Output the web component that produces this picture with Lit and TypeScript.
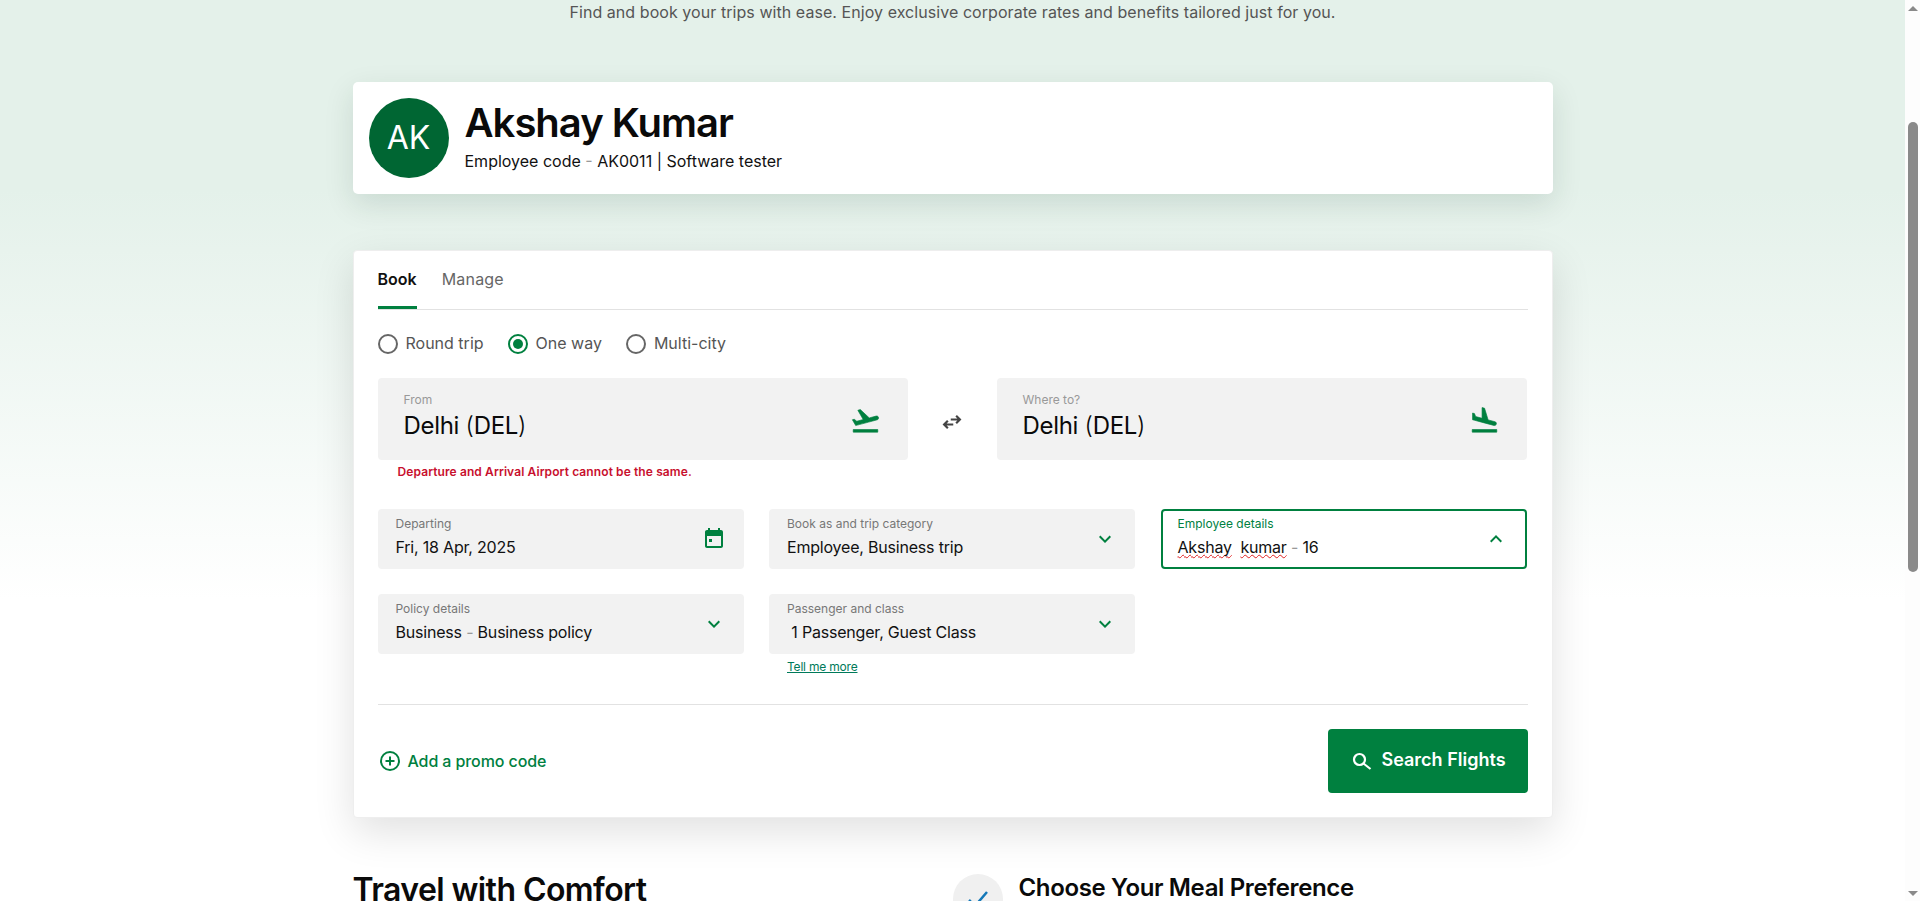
import { LitElement, css, html, svg } from 'lit';
import { customElement, state } from 'lit/decorators.js';

const TAKEOFF = svg`<path d="M2.5 19h19v2h-19v-2zm19.57-9.36c-.21-.8-1.04-1.28-1.84-1.06L14.92 10 8 3.57l-1.91.51 4.14 7.17-4.97 1.33-1.97-1.54-1.45.39 2.59 4.49s7.12-1.9 16.57-4.43c.81-.23 1.28-1.05 1.07-1.85z"/>`;
const LANDING = svg`<path d="M2.5 19h19v2h-19v-2zm7.18-5.73l4.35 1.16 5.31 1.42c.8.21 1.62-.26 1.84-1.06.21-.8-.26-1.62-1.06-1.84l-5.31-1.42-2.76-9.02L10.12 2v8.28L5.15 8.95l-.93-2.32-1.45-.39v5.17l1.6.43 5.31 1.43z"/>`;
const CALENDAR = svg`<path d="M19 3h-1V1h-2v2H8V1H6v2H5c-1.11 0-1.99.9-1.99 2L3 19c0 1.1.89 2 2 2h14c1.1 0 2-.9 2-2V5c0-1.1-.9-2-2-2zm0 16H5V9h14v10zM7 12h3v3H7z"/>`;
const CHEVRON_DOWN = svg`<path d="M16.59 8.59 12 13.17 7.41 8.59 6 10l6 6 6-6z"/>`;
const CHEVRON_UP = svg`<path d="M12 8l-6 6 1.41 1.41L12 10.83l4.59 4.58L18 14z"/>`;

@customElement('app-root')
export class AppRoot extends LitElement {
  static styles = css`
    :host {
      display: block;
      height: 901px;
      overflow: hidden;
      font-family: 'Inter', 'Liberation Sans', sans-serif;
      color: #111;
    }

    .page {
      display: flex;
      height: 901px;
    }

    .main {
      flex: 1;
      min-width: 0;
      overflow: hidden;
      background: linear-gradient(180deg, #e4f1ea 0, #e4f1ea 190px, #ffffff 600px);
    }

    .container {
      width: 1200px;
      margin: 0 auto;
    }

    .tagline {
      height: 24px;
      line-height: 24px;
      font-size: 16px;
      letter-spacing: 0.06px;
      color: #555;
      text-align: center;
    }

    .profile {
      display: flex;
      align-items: center;
      gap: 16px;
      height: 112px;
      margin-top: 58px;
      padding: 0 16px;
      box-sizing: border-box;
      background: #fff;
      border-radius: 5px;
      box-shadow: 0 10px 30px rgba(0, 50, 30, 0.12);
    }

    .avatar {
      flex: none;
      width: 80px;
      height: 80px;
      border-radius: 50%;
      background: #006633;
      color: #fff;
      font-size: 32px;
      line-height: 80px;
      text-align: center;
    }

    .identity {
      padding-bottom: 5px;
    }

    .name {
      font-size: 40px;
      line-height: 46px;
      font-weight: 600;
      letter-spacing: -1px;
      color: #0a0a0a;
    }

    .code {
      font-size: 16px;
      line-height: 20px;
      margin-top: 5px;
      color: #111;
    }

    .muted {
      color: #999;
    }

    .booking {
      margin-top: 56px;
      height: 568px;
      padding: 0 24px;
      box-sizing: border-box;
      background: #fff;
      border: 1px solid #eee;
      border-radius: 4px;
      box-shadow: 0 14px 40px rgba(0, 0, 0, 0.12);
    }

    .tabs {
      display: flex;
      gap: 25px;
      height: 58px;
      border-bottom: 1px solid #e2e2e2;
    }

    .tab {
      height: 58px;
      box-sizing: border-box;
      padding-top: 17px;
      font-size: 16px;
      line-height: 22px;
      letter-spacing: 0.2px;
      color: #666;
    }

    .tab.active {
      color: #111;
      font-weight: 600;
      letter-spacing: 0;
      border-bottom: 3px solid #00803f;
    }

    .trip-types {
      display: flex;
      gap: 24px;
      margin-top: 24px;
      height: 20px;
    }

    .radio {
      display: flex;
      align-items: center;
      gap: 8px;
      font-size: 16px;
      line-height: 20px;
      color: #555;
    }

    .radio-text {
      margin-top: -2px;
    }

    .dot {
      width: 20px;
      height: 20px;
      box-sizing: border-box;
      border: 2px solid #666;
      border-radius: 50%;
      display: flex;
      align-items: center;
      justify-content: center;
    }

    .dot.on {
      border-color: #00803f;
    }

    .dot.on::after {
      content: '';
      width: 10px;
      height: 10px;
      border-radius: 50%;
      background: #00803f;
    }

    .airports {
      display: grid;
      grid-template-columns: 530px 89px 530px;
      margin-top: 24px;
    }

    .airport {
      display: flex;
      align-items: center;
      justify-content: space-between;
      height: 82px;
      padding: 0 27px 0 26px;
      box-sizing: border-box;
      background: #f2f2f2;
      border-radius: 4px;
    }

    .airport-label {
      font-size: 12px;
      line-height: 16px;
      color: #999;
    }

    .airport-value {
      font-size: 24px;
      line-height: 30px;
      letter-spacing: -0.3px;
      margin-top: 3px;
      margin-bottom: 6px;
      color: #0a0a0a;
    }

    .airport-value span {
      font-weight: 300;
    }

    .airport svg {
      width: 31px;
      height: 31px;
      margin-top: 3px;
      fill: #00803f;
      stroke: #00803f;
      stroke-width: 0.5;
    }

    .swap {
      display: flex;
      align-items: center;
      justify-content: center;
    }

    .swap svg {
      width: 20px;
      height: 20px;
      margin-top: 6px;
      fill: none;
      stroke: #444;
      stroke-width: 2.6;
    }

    .error {
      height: 24px;
      padding: 1px 0 0 20px;
      box-sizing: border-box;
      font-size: 12px;
      line-height: 22px;
      font-weight: 600;
      letter-spacing: 0.1px;
      color: #c8102e;
    }

    .fields {
      display: grid;
      grid-template-columns: repeat(3, 366px);
      gap: 25px 25.5px;
      margin-top: 25px;
    }

    .field {
      display: flex;
      align-items: center;
      justify-content: space-between;
      height: 60px;
      padding: 0 18px;
      box-sizing: border-box;
      background: #f2f2f2;
      border-radius: 4px;
    }

    .field.open {
      padding: 0 17px 0 15px;
      background: #fff;
      border: 2px solid #00803f;
    }

    .field svg {
      flex: none;
      width: 24px;
      height: 24px;
      fill: #00803f;
    }

    .field-label {
      font-size: 12px;
      line-height: 16px;
      color: #777;
    }

    .field.open .field-label {
      color: #00803f;
    }

    .field-value {
      font-size: 16px;
      line-height: 22px;
      letter-spacing: -0.2px;
      margin-top: 4px;
      margin-bottom: 4px;
      color: #111;
      white-space: pre;
    }

    .typo {
      text-decoration: underline wavy #e02020 1px;
      text-decoration-skip-ink: none;
    }

    .more {
      display: inline-block;
      margin: 5px 0 0 18px;
      font-size: 12px;
      line-height: 16px;
      letter-spacing: -0.2px;
      color: #007a5a;
      text-decoration: underline;
    }

    .actions {
      display: flex;
      align-items: center;
      justify-content: space-between;
      margin-top: 29px;
      padding-top: 24px;
      border-top: 1px solid #e2e2e2;
    }

    .promo {
      display: flex;
      align-items: center;
      gap: 8px;
      padding-left: 2px;
      font-size: 16px;
      font-weight: 500;
      letter-spacing: -0.1px;
      color: #00803f;
    }

    .promo svg {
      width: 20px;
      height: 20px;
      fill: none;
      stroke: #00803f;
      stroke-width: 2;
    }

    .search {
      display: flex;
      align-items: center;
      justify-content: center;
      gap: 7px;
      width: 200px;
      height: 64px;
      padding-bottom: 5px;
      box-sizing: border-box;
      border: 0;
      border-radius: 4px;
      background: #00803f;
      color: #fff;
      font: 600 18px 'Inter', 'Liberation Sans', sans-serif;
    }

    .search svg {
      width: 24px;
      height: 24px;
      margin: 9px 0 0 1px;
      fill: none;
      stroke: #fff;
      stroke-width: 2.2;
    }

    .extras {
      display: grid;
      grid-template-columns: 600px 1fr;
      margin-top: 53px;
    }

    .extras h2 {
      margin: 0;
      font-size: 32px;
      line-height: 38px;
      font-weight: 600;
      letter-spacing: -0.58px;
      color: #0a0a0a;
      white-space: nowrap;
    }

    .meal {
      display: flex;
      gap: 16px;
    }

    .check {
      flex: none;
      width: 50px;
      height: 50px;
      margin-top: 3px;
      border-radius: 50%;
      background: #f0f0f0;
      display: flex;
      align-items: center;
      justify-content: center;
    }

    .check svg {
      width: 28px;
      height: 28px;
      fill: none;
      stroke: #1478b8;
      stroke-width: 2.500;
    }

    .meal h3 {
      margin: 0;
      font-size: 24px;
      line-height: 34px;
      font-weight: 600;
      letter-spacing: -0.36px;
      color: #0a0a0a;
    }

    .scrollbar {
      flex: none;
      width: 15px;
      height: 901px;
      background: #fdfdfd;
      display: flex;
      flex-direction: column;
      align-items: center;
    }

    .arrow {
      width: 0;
      height: 0;
      margin-top: 6px;
      border-left: 5px solid transparent;
      border-right: 5px solid transparent;
      border-bottom: 5px solid #8a8a8a;
    }

    .arrow.down {
      margin-top: 319px;
      border-bottom: 0;
      border-top: 5px solid #8a8a8a;
    }

    .thumb {
      width: 10px;
      height: 450px;
      margin-top: 111px;
      border-radius: 5px;
      background: #8a8a8a;
    }
  `;

  @state() private tripType = 'One way';

  private icon(body: unknown) {
    return html`<svg viewBox="0 0 24 24">${body}</svg>`;
  }

  private renderRadio(label: string) {
    return html`
      <div class="radio">
        <span class="dot ${this.tripType === label ? 'on' : ''}"></span><span class="radio-text">${label}</span>
      </div>
    `;
  }

  private renderField(label: string, value: unknown, icon: unknown, open = false) {
    return html`
      <div class="field ${open ? 'open' : ''}">
        <div>
          <div class="field-label">${label}</div>
          <div class="field-value">${value}</div>
        </div>
        ${this.icon(icon)}
      </div>
    `;
  }

  render() {
    return html`
      <div class="page">
        <div class="main">
          <div class="container">
            <div class="tagline">
              Find and book your trips with ease. Enjoy exclusive corporate rates and benefits tailored just for you.
            </div>

            <div class="profile">
              <div class="avatar">AK</div>
              <div class="identity">
                <div class="name">Akshay Kumar</div>
                <div class="code">Employee code <span class="muted">-</span> AK0011 | Software tester</div>
              </div>
            </div>

            <div class="booking">
              <div class="tabs">
                <div class="tab active">Book</div>
                <div class="tab">Manage</div>
              </div>

              <div class="trip-types">
                ${['Round trip', 'One way', 'Multi-city'].map((t) => this.renderRadio(t))}
              </div>

              <div class="airports">
                <div class="airport">
                  <div>
                    <div class="airport-label">From</div>
                    <div class="airport-value">Delhi <span>(</span>DEL<span>)</span></div>
                  </div>
                  ${this.icon(TAKEOFF)}
                </div>
                <div class="swap">
                  <svg viewBox="0 0 24 24">
                    <path d="M10.500 9H21M17 4.500 21.500 9 17 13.500M13.500 15H3M7 10.500 2.500 15 7 19.500" />
                  </svg>
                </div>
                <div class="airport">
                  <div>
                    <div class="airport-label">Where to?</div>
                    <div class="airport-value">Delhi <span>(</span>DEL<span>)</span></div>
                  </div>
                  ${this.icon(LANDING)}
                </div>
              </div>
              <div class="error">Departure and Arrival Airport cannot be the same.</div>

              <div class="fields">
                ${this.renderField('Departing', 'Fri, 18 Apr, 2025', CALENDAR)}
                ${this.renderField('Book as and trip category', 'Employee, Business trip', CHEVRON_DOWN)}
                ${this.renderField(
                  'Employee details',
                  html`<span class="typo">Akshay</span>  <span class="typo">kumar</span> <span class="muted">-</span> 16`,
                  CHEVRON_UP,
                  true,
                )}
                ${this.renderField(
                  'Policy details',
                  html`Business <span class="muted">-</span> Business policy`,
                  CHEVRON_DOWN,
                )}
                <div>
                  ${this.renderField('Passenger and class', ' 1 Passenger, Guest Class', CHEVRON_DOWN)}
                  <a class="more">Tell me more</a>
                </div>
              </div>

              <div class="actions">
                <div class="promo">
                  <svg viewBox="0 0 20 20">
                    <circle cx="10" cy="10" r="9" />
                    <path d="M10 5.500v9M5.500 10h9" />
                  </svg>
                  Add a promo code
                </div>
                <button class="search">
                  <svg viewBox="0 0 24 24">
                    <circle cx="9.500" cy="7.500" r="5.500" />
                    <path d="M13.500 11.500 20.500 17" />
                  </svg>
                  Search Flights
                </button>
              </div>
            </div>

            <div class="extras">
              <h2>Travel with Comfort</h2>
              <div class="meal">
                <div class="check">
                  <svg viewBox="0 0 28 28"><path d="M5 15l6 6L23 7" /></svg>
                </div>
                <h3>Choose Your Meal Preference</h3>
              </div>
            </div>
          </div>
        </div>

        <div class="scrollbar">
          <div class="arrow"></div>
          <div class="thumb"></div>
          <div class="arrow down"></div>
        </div>
      </div>
    `;
  }
}

declare global {
  interface HTMLElementTagNameMap {
    'app-root': AppRoot;
  }
}
